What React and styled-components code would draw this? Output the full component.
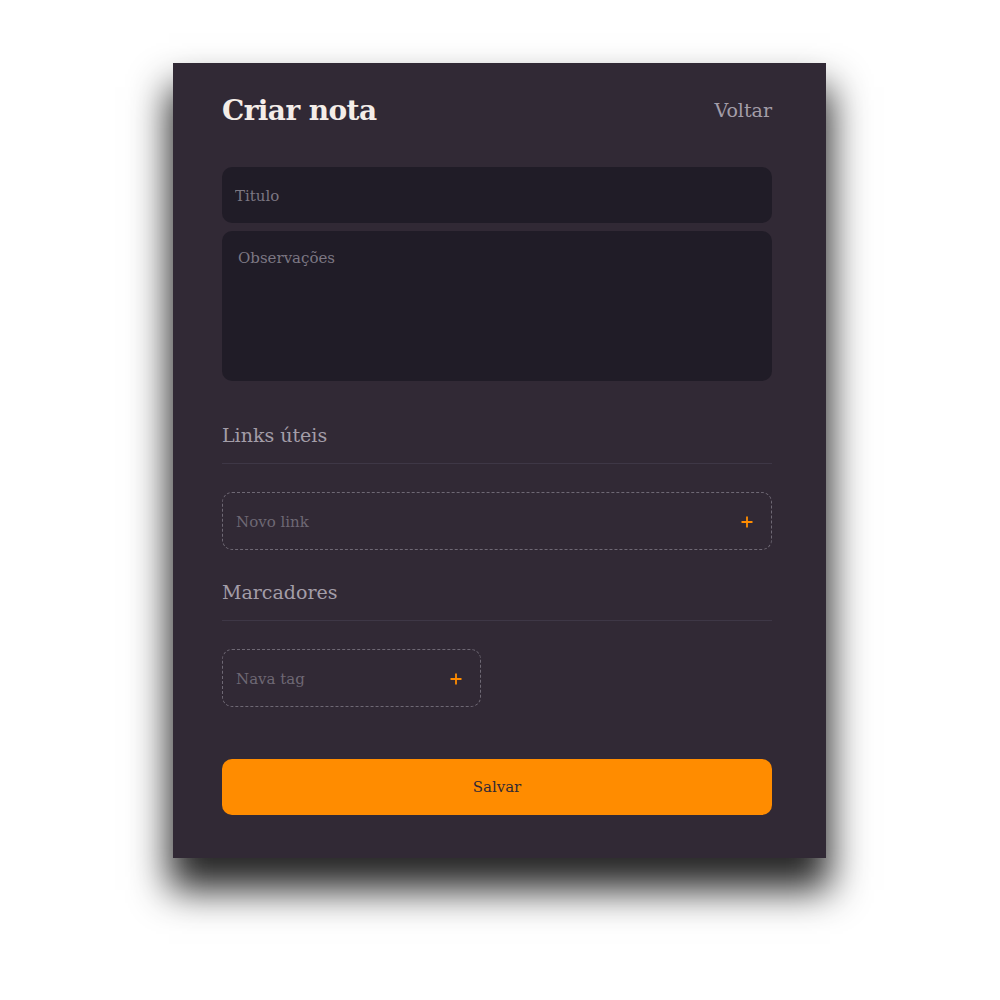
import styled, { createGlobalStyle } from "styled-components";

const Global = createGlobalStyle`
  * { box-sizing: border-box; }
  body {
    margin: 0;
    background: #ffffff;
    font-family: "DejaVu Serif", "Liberation Serif", serif;
  }
`;

const Page = styled.div`
  width: 1000px;
  height: 1000px;
  padding-top: 63px;
  display: flex;
  justify-content: center;
  align-items: flex-start;
`;

const Card = styled.main`
  width: 653px;
  height: 795px;
  margin-left: -1px;
  background: #312935;
  box-shadow: 0 28px 36px 4px rgba(0, 0, 0, 0.85);
  padding: 26px 54px 0 49px;
  display: flex;
  flex-direction: column;
`;

const Header = styled.header`
  display: flex;
  justify-content: space-between;
  align-items: center;
  height: 42px;
  margin-bottom: 36px;
`;

const Title = styled.h1`
  margin: 0;
  font-size: 28px;
  font-weight: 700;
  color: #f4ede8;
  letter-spacing: -0.6px;
`;

const BackLink = styled.a`
  font-size: 19px;
  color: #a39da8;
  text-decoration: none;
`;

const Input = styled.input`
  width: 100%;
  height: 56px;
  border: none;
  outline: none;
  border-radius: 10px;
  background: #201c27;
  padding: 2px 13px 0;
  font-family: inherit;
  font-size: 15px;
  color: #f4ede8;
  &::placeholder { color: #7c7783; }
`;

const TextArea = styled.textarea`
  width: 100%;
  height: 150px;
  margin-top: 8px;
  border: none;
  outline: none;
  resize: none;
  border-radius: 10px;
  background: #201c27;
  padding: 18px 16px;
  font-family: inherit;
  font-size: 15px;
  color: #f4ede8;
  &::placeholder { color: #7c7783; }
`;

const Section = styled.section`
  margin-top: ${({ $top }) => $top}px;
`;

const SectionTitle = styled.h2`
  margin: 0;
  font-size: 19px;
  font-weight: 400;
  color: #a39da8;
  padding-bottom: 17px;
  border-bottom: 1px solid #3e3746;
`;

const NewItem = styled.div`
  margin-top: 28px;
  width: ${({ $w }) => $w};
  height: 58px;
  border: 1px dashed #6e6874;
  border-radius: 10px;
  display: flex;
  align-items: center;
  padding: 2px 17px 0 11px;
`;

const ItemInput = styled.input`
  flex: 1;
  min-width: 0;
  background: transparent;
  border: none;
  outline: none;
  font-family: inherit;
  font-size: 15px;
  color: #f4ede8;
  &::placeholder { color: #6e6874; }
`;

const AddButton = styled.button`
  background: none;
  border: none;
  padding: 0;
  display: flex;
  cursor: pointer;
`;

const SaveButton = styled.button`
  margin-top: 52px;
  width: 100%;
  height: 56px;
  border: none;
  border-radius: 10px;
  background: #ff8c00;
  color: #312935;
  font-family: inherit;
  font-size: 15px;
  cursor: pointer;
`;

const Plus = () => (
  <svg width="14" height="14" viewBox="0 0 14 14">
    <path d="M7 1.5v11M1.5 7h11" stroke="#ff8c00" strokeWidth="1.8" />
  </svg>
);

export default function App() {
  return (
    <>
      <Global />
      <Page>
        <Card>
          <Header>
            <Title>Criar nota</Title>
            <BackLink href="#">Voltar</BackLink>
          </Header>
          <Input placeholder="Titulo" />
          <TextArea placeholder="Observações" />
          <Section $top={43}>
            <SectionTitle>Links úteis</SectionTitle>
            <NewItem $w="100%">
              <ItemInput placeholder="Novo link" />
              <AddButton><Plus /></AddButton>
            </NewItem>
          </Section>
          <Section $top={31}>
            <SectionTitle>Marcadores</SectionTitle>
            <NewItem $w="259px">
              <ItemInput placeholder="Nava tag" />
              <AddButton><Plus /></AddButton>
            </NewItem>
          </Section>
          <SaveButton>Salvar</SaveButton>
        </Card>
      </Page>
    </>
  );
}
